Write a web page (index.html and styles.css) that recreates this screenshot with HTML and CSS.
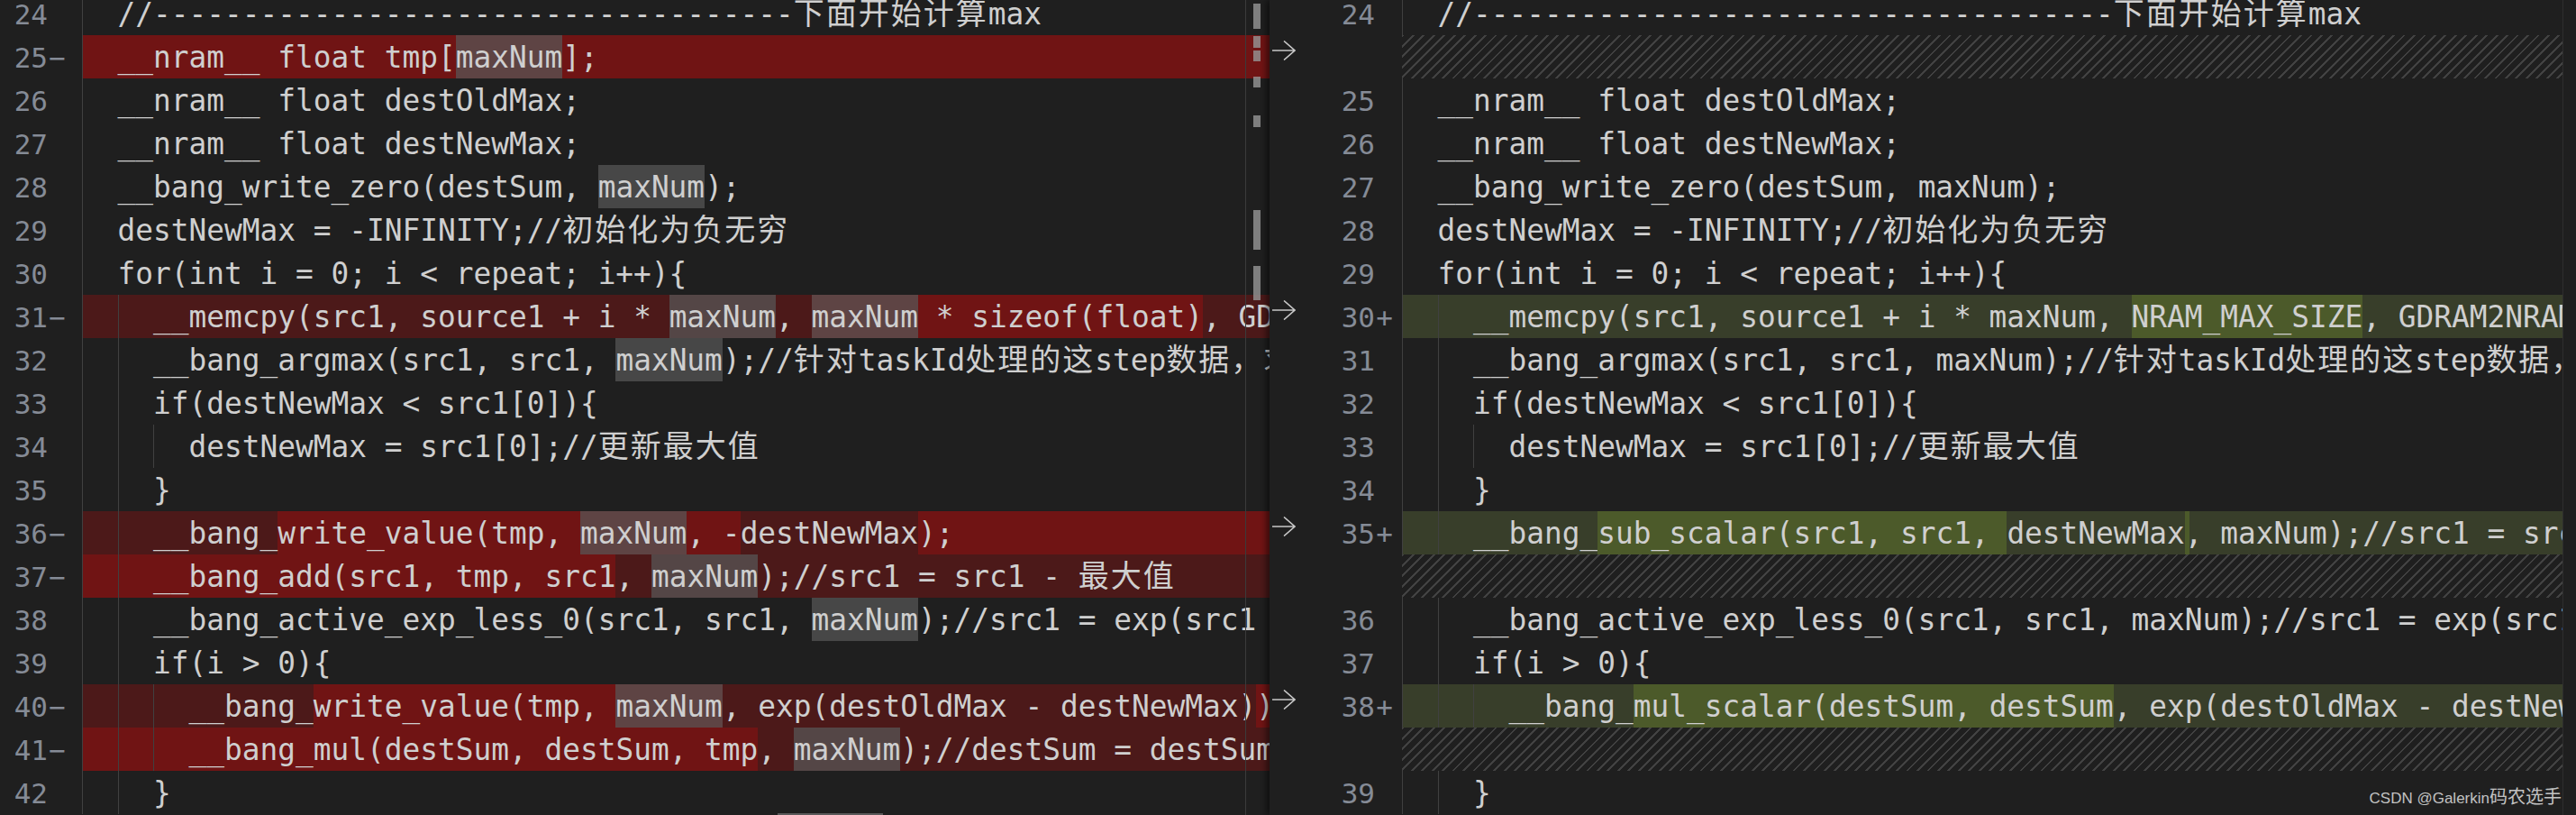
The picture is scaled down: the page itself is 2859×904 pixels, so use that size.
FILE: index.html
```html
<!DOCTYPE html>
<html>
<head>
    <meta charset="utf-8" />
    <title>diff - softmax.mlu</title>
    <link rel="stylesheet" href="styles.css">
</head>
<body>
    <div class="diff">
        <!-- original side -->
        <div class="side orig">
            <div class="lines">
                <div class="line"><div class="gut"><span class="num">24</span><span class="mk"></span></div><div class="src"><span class="ig">  </span>//------------------------------------<span class="cjk">下面开始计算</span>max</div></div>
                <div class="line"><div class="gut"><span class="num">25</span><span class="mk">−</span></div><div class="src rb"><span class="ig">  </span>__nram__ float tmp[<span class="hl">maxNum</span>];</div></div>
                <div class="line"><div class="gut"><span class="num">26</span><span class="mk"></span></div><div class="src"><span class="ig">  </span>__nram__ float destOldMax;</div></div>
                <div class="line"><div class="gut"><span class="num">27</span><span class="mk"></span></div><div class="src"><span class="ig">  </span>__nram__ float destNewMax;</div></div>
                <div class="line"><div class="gut"><span class="num">28</span><span class="mk"></span></div><div class="src"><span class="ig">  </span>__bang_write_zero(destSum, <span class="hl">maxNum</span>);</div></div>
                <div class="line"><div class="gut"><span class="num">29</span><span class="mk"></span></div><div class="src"><span class="ig">  </span>destNewMax = -INFINITY;//<span class="cjk">初始化为负无穷</span></div></div>
                <div class="line"><div class="gut"><span class="num">30</span><span class="mk"></span></div><div class="src"><span class="ig">  </span>for(int i = 0; i &lt; repeat; i++){</div></div>
                <div class="line"><div class="gut"><span class="num">31</span><span class="mk">−</span></div><div class="src rl"><span class="ig">  </span><span class="ig">  </span>__memcpy(src1, source1 + i * <span class="hl">maxNum</span>, <span class="xb"><span class="hl">maxNum</span> * sizeof(float)</span>, GDRAM2NRAM);</div></div>
                <div class="line"><div class="gut"><span class="num">32</span><span class="mk"></span></div><div class="src"><span class="ig">  </span><span class="ig">  </span>__bang_argmax(src1, src1, <span class="hl">maxNum</span>);//<span class="cjk">针对</span>taskId<span class="cjk">处理的这</span>step<span class="cjk">数据，求</span></div></div>
                <div class="line"><div class="gut"><span class="num">33</span><span class="mk"></span></div><div class="src"><span class="ig">  </span><span class="ig">  </span>if(destNewMax &lt; src1[0]){</div></div>
                <div class="line"><div class="gut"><span class="num">34</span><span class="mk"></span></div><div class="src"><span class="ig">  </span><span class="ig">  </span><span class="ig">  </span>destNewMax = src1[0];//<span class="cjk">更新最大值</span></div></div>
                <div class="line"><div class="gut"><span class="num">35</span><span class="mk"></span></div><div class="src"><span class="ig">  </span><span class="ig">  </span>}</div></div>
                <div class="line"><div class="gut"><span class="num">36</span><span class="mk">−</span></div><div class="src rb"><span class="xd"><span class="ig">  </span><span class="ig">  </span>__bang_</span>write_value(tmp, <span class="hl">maxNum</span>, -<span class="xd">destNewMax</span>);</div></div>
                <div class="line"><div class="gut"><span class="num">37</span><span class="mk">−</span></div><div class="src rl"><span class="xb"><span class="ig">  </span><span class="ig">  </span>__bang_add(src1, tmp, src1</span>, <span class="hl">maxNum</span>);//src1 = src1 - <span class="cjk">最大值</span></div></div>
                <div class="line"><div class="gut"><span class="num">38</span><span class="mk"></span></div><div class="src"><span class="ig">  </span><span class="ig">  </span>__bang_active_exp_less_0(src1, src1, <span class="hl">maxNum</span>);//src1 = exp(src1 - destNewMax)</div></div>
                <div class="line"><div class="gut"><span class="num">39</span><span class="mk"></span></div><div class="src"><span class="ig">  </span><span class="ig">  </span>if(i &gt; 0){</div></div>
                <div class="line"><div class="gut"><span class="num">40</span><span class="mk">−</span></div><div class="src rl"><span class="ig">  </span><span class="ig">  </span><span class="ig">  </span>__bang_<span class="xb">write_value(tmp, <span class="hl">maxNum</span></span>, exp(destOldMax - destNewMax)<span class="xb">)</span>;</div></div>
                <div class="line"><div class="gut"><span class="num">41</span><span class="mk">−</span></div><div class="src rl"><span class="xb"><span class="ig">  </span><span class="ig">  </span><span class="ig">  </span>__bang_mul(destSum, destSum, tmp</span>, <span class="hl">maxNum</span>);//destSum = destSum * exp(destOldMax - destNewMax)</div></div>
                <div class="line"><div class="gut"><span class="num">42</span><span class="mk"></span></div><div class="src"><span class="ig">  </span><span class="ig">  </span>}</div></div>
            </div>
            <div class="ruler">
                <i style="top:4px;height:28px"></i>
                <i style="top:40px;height:13px"></i>
                <i style="top:56px;height:12px"></i>
                <i style="top:85px;height:12px"></i>
                <i style="top:128px;height:13px"></i>
                <i style="top:233px;height:44px"></i>
                <i style="top:295px;height:38px"></i>
            </div>
            <div class="hthumb"></div>
        </div>

        <!-- modified side -->
        <div class="side mod">
            <div class="lines">
                <div class="line"><div class="gut"><span class="ac"></span><span class="num">24</span><span class="mk"></span></div><div class="src"><span class="ig">  </span>//------------------------------------<span class="cjk">下面开始计算</span>max</div></div>
                <div class="line"><div class="gut"><span class="ac"><svg class="arr" viewBox="0 0 26 22"><path d="M0 11H25M13 0.5L25 11L13 21.5"/></svg></span><span class="num"></span><span class="mk"></span></div><div class="src hatch"></div></div>
                <div class="line"><div class="gut"><span class="ac"></span><span class="num">25</span><span class="mk"></span></div><div class="src"><span class="ig">  </span>__nram__ float destOldMax;</div></div>
                <div class="line"><div class="gut"><span class="ac"></span><span class="num">26</span><span class="mk"></span></div><div class="src"><span class="ig">  </span>__nram__ float destNewMax;</div></div>
                <div class="line"><div class="gut"><span class="ac"></span><span class="num">27</span><span class="mk"></span></div><div class="src"><span class="ig">  </span>__bang_write_zero(destSum, maxNum);</div></div>
                <div class="line"><div class="gut"><span class="ac"></span><span class="num">28</span><span class="mk"></span></div><div class="src"><span class="ig">  </span>destNewMax = -INFINITY;//<span class="cjk">初始化为负无穷</span></div></div>
                <div class="line"><div class="gut"><span class="ac"></span><span class="num">29</span><span class="mk"></span></div><div class="src"><span class="ig">  </span>for(int i = 0; i &lt; repeat; i++){</div></div>
                <div class="line"><div class="gut"><span class="ac"><svg class="arr" viewBox="0 0 26 22"><path d="M0 11H25M13 0.5L25 11L13 21.5"/></svg></span><span class="num">30</span><span class="mk">+</span></div><div class="src gl"><span class="ig">  </span><span class="ig">  </span>__memcpy(src1, source1 + i * maxNum, <span class="gb">NRAM_MAX_SIZE</span>, GDRAM2NRAM);</div></div>
                <div class="line"><div class="gut"><span class="ac"></span><span class="num">31</span><span class="mk"></span></div><div class="src"><span class="ig">  </span><span class="ig">  </span>__bang_argmax(src1, src1, maxNum);//<span class="cjk">针对</span>taskId<span class="cjk">处理的这</span>step<span class="cjk">数据，求</span></div></div>
                <div class="line"><div class="gut"><span class="ac"></span><span class="num">32</span><span class="mk"></span></div><div class="src"><span class="ig">  </span><span class="ig">  </span>if(destNewMax &lt; src1[0]){</div></div>
                <div class="line"><div class="gut"><span class="ac"></span><span class="num">33</span><span class="mk"></span></div><div class="src"><span class="ig">  </span><span class="ig">  </span><span class="ig">  </span>destNewMax = src1[0];//<span class="cjk">更新最大值</span></div></div>
                <div class="line"><div class="gut"><span class="ac"></span><span class="num">34</span><span class="mk"></span></div><div class="src"><span class="ig">  </span><span class="ig">  </span>}</div></div>
                <div class="line"><div class="gut"><span class="ac"><svg class="arr" viewBox="0 0 26 22"><path d="M0 11H25M13 0.5L25 11L13 21.5"/></svg></span><span class="num">35</span><span class="mk">+</span></div><div class="src gl"><span class="ig">  </span><span class="ig">  </span>__bang_<span class="gb">sub_scalar(src1, src1, </span>destNewMax<span class="tick"></span>, maxNum);//src1 = src1 - <span class="cjk">最大值</span></div></div>
                <div class="line"><div class="gut"><span class="ac"></span><span class="num"></span><span class="mk"></span></div><div class="src hatch"></div></div>
                <div class="line"><div class="gut"><span class="ac"></span><span class="num">36</span><span class="mk"></span></div><div class="src"><span class="ig">  </span><span class="ig">  </span>__bang_active_exp_less_0(src1, src1, maxNum);//src1 = exp(src1 - destNewMax)</div></div>
                <div class="line"><div class="gut"><span class="ac"></span><span class="num">37</span><span class="mk"></span></div><div class="src"><span class="ig">  </span><span class="ig">  </span>if(i &gt; 0){</div></div>
                <div class="line"><div class="gut"><span class="ac"><svg class="arr" viewBox="0 0 26 22"><path d="M0 11H25M13 0.5L25 11L13 21.5"/></svg></span><span class="num">38</span><span class="mk">+</span></div><div class="src gl"><span class="ig">  </span><span class="ig">  </span><span class="ig">  </span>__bang_<span class="gb">mul_scalar(destSum, destSum</span>, exp(destOldMax - destNewMax), maxNum);</div></div>
                <div class="line"><div class="gut"><span class="ac"></span><span class="num"></span><span class="mk"></span></div><div class="src hatch"></div></div>
                <div class="line"><div class="gut"><span class="ac"></span><span class="num">39</span><span class="mk"></span></div><div class="src"><span class="ig">  </span><span class="ig">  </span>}</div></div>
            </div>
            <div class="vscroll"></div>
        </div>

        <div class="wm">CSDN @Galerkin<span class="wmcjk">码农选手</span></div>
    </div>
</body>
</html>
```

FILE: styles.css
```css
body {
    margin: 0;
    background-color: #1f1f1f;
    overflow: hidden;
}
.diff {
    display: flex;
    position: relative;
    width: 2859px;
    height: 904px;
    overflow: hidden;
    font-family: "DejaVu Sans Mono", "Noto Sans CJK SC", monospace;
    font-size: 32.8px;
    color: #cfcfcf;
}
.side {
    height: 100%;
    overflow: hidden;
}
.orig {
    position: relative;
    flex: none;
    width: 1409px;
}
.mod {
    position: relative;
    z-index: 1;
    flex: 1;
    display: flex;
    background-color: #1f1f1f;
    box-shadow: -4px 0 6px rgba(0, 0, 0, 0.45);
}
.lines {
    margin-top: -9px;
}
.mod .lines {
    flex: 1;
    min-width: 0;
}
.line {
    display: flex;
    height: 48px;
}

/* gutter */
.gut {
    flex: none;
    display: flex;
    font-size: 31px;
    line-height: 51px;
    color: #858b96;
}
.orig .gut {
    width: 91px;
}
.mod .gut {
    width: 147px;
}
.num {
    width: 53px;
    text-align: right;
}
.mod .num {
    width: 60px;
}
.mk {
    width: 21px;
    text-align: center;
}
.ac {
    width: 57px;
}
.arr {
    display: block;
    width: 26px;
    height: 22px;
    margin: 6px 0 0 3px;
}
.arr path {
    fill: none;
    stroke: #c8c8c8;
    stroke-width: 1.6;
}

/* code */
.src {
    flex: 1;
    min-width: 0;
    height: 48px;
    line-height: 51px;
    white-space: pre;
    overflow: hidden;
}
.ig, .hl, .xb, .xd, .gb, .tick {
    display: inline-block;
    height: 48px;
    vertical-align: top;
}
.ig {
    box-shadow: inset 1px 0 0 #404040;
}
.hl {
    background-color: rgba(87, 87, 87, 0.72);
}
.rb, .xb {
    background-color: #701414;
}
.rl, .xd {
    background-color: #4c1919;
}
.gl {
    background-color: #383e2a;
}
.gb {
    background-color: #4c5a2a;
}
.tick {
    width: 5px;
    margin-right: -5px;
    background-color: #4c5a2a;
}
.hatch {
    background: repeating-linear-gradient(135deg, #424242 0 2px, transparent 2px 8.1px);
}
.cjk {
    font-family: "Noto Sans CJK SC", sans-serif;
    font-size: 34px;
    letter-spacing: 2px;
    line-height: 0;
}

/* overview ruler of the left editor */
.ruler {
    position: absolute;
    top: 0;
    right: 0;
    width: 26px;
    height: 100%;
    border-left: 1px solid #3b3b3b;
}
.ruler i {
    position: absolute;
    left: 8px;
    width: 8px;
    background-color: rgba(150, 150, 150, 0.8);
}
.hthumb {
    position: absolute;
    left: 863px;
    bottom: 0;
    width: 117px;
    height: 2px;
    background-color: #5a5a5a;
}
.vscroll {
    flex: none;
    width: 14px;
    border-left: 1px solid #2e2e2e;
}

.wm {
    position: absolute;
    z-index: 2;
    right: 16px;
    bottom: 7px;
    font-family: "Liberation Sans", "Noto Sans CJK SC", sans-serif;
    font-size: 17px;
    color: rgba(225, 225, 225, 0.85);
}
.wmcjk {
    font-size: 20px;
}
```
